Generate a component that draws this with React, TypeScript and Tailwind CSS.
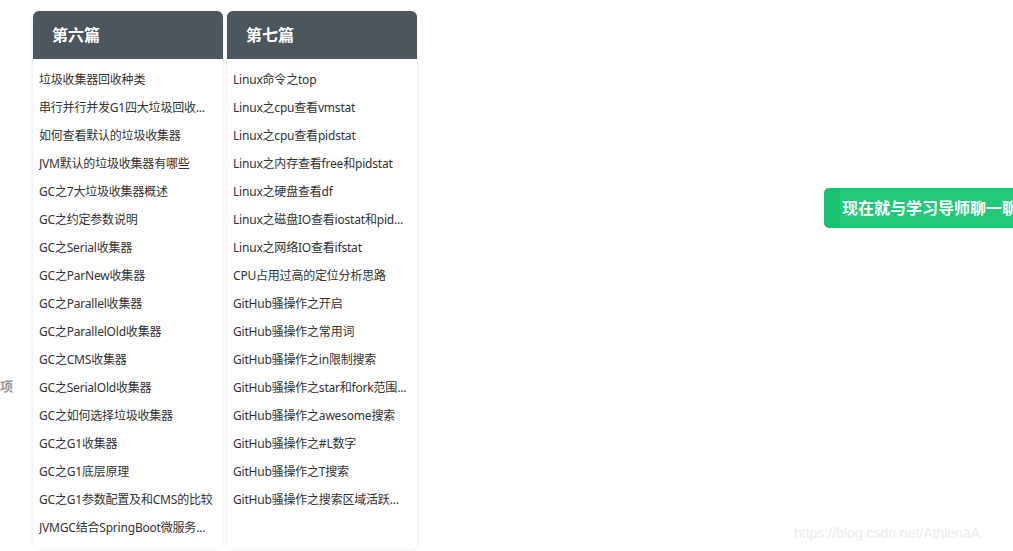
const six = [
  '垃圾收集器回收种类',
  '串行并行并发G1四大垃圾回收...',
  '如何查看默认的垃圾收集器',
  'JVM默认的垃圾收集器有哪些',
  'GC之7大垃圾收集器概述',
  'GC之约定参数说明',
  'GC之Serial收集器',
  'GC之ParNew收集器',
  'GC之Parallel收集器',
  'GC之ParallelOld收集器',
  'GC之CMS收集器',
  'GC之SerialOld收集器',
  'GC之如何选择垃圾收集器',
  'GC之G1收集器',
  'GC之G1底层原理',
  'GC之G1参数配置及和CMS的比较',
  'JVMGC结合SpringBoot微服务...',
];

const seven = [
  'Linux命令之top',
  'Linux之cpu查看vmstat',
  'Linux之cpu查看pidstat',
  'Linux之内存查看free和pidstat',
  'Linux之硬盘查看df',
  'Linux之磁盘IO查看iostat和pid...',
  'Linux之网络IO查看ifstat',
  'CPU占用过高的定位分析思路',
  'GitHub骚操作之开启',
  'GitHub骚操作之常用词',
  'GitHub骚操作之in限制搜索',
  'GitHub骚操作之star和fork范围...',
  'GitHub骚操作之awesome搜索',
  'GitHub骚操作之#L数字',
  'GitHub骚操作之T搜索',
  'GitHub骚操作之搜索区域活跃...',
];

const font = { fontFamily: '"Noto Sans", "Noto Sans CJK SC", sans-serif' };

function Card({ title, items }: { title: string; items: string[] }) {
  return (
    <div className="flex w-[190px] shrink-0 flex-col rounded-[6px] bg-white shadow-[0_0_3px_rgba(0,0,0,0.12)]">
      <div className="flex h-[48px] items-center rounded-t-[6px] bg-[#4d555d] pl-[19px] text-[16px] font-bold text-white">
        {title}
      </div>
      <ul className="flex flex-1 flex-col pt-[7px] pb-[7px] pl-[6px] pr-[2px]">
        {items.map((t) => (
          <li key={t} className="h-[28px] truncate text-[12px] leading-[28px] tracking-[-0.2px] text-[#333]">
            {t}
          </li>
        ))}
      </ul>
    </div>
  );
}

export default function App() {
  return (
    <div className="relative flex h-[551px] w-[1013px] overflow-hidden bg-white" style={font}>
      <div className="w-[33px] shrink-0 pt-[376px] text-[13px] font-bold leading-[20px] text-[#999]">项</div>
      <div className="flex gap-[4px] pt-[11px] pb-[2px]">
        <Card title="第六篇" items={six} />
        <Card title="第七篇" items={seven} />
      </div>
      <div className="shrink-0 pt-[188px] pl-[407px]">
        <button className="flex h-[40px] items-center whitespace-nowrap rounded-[5px] bg-[linear-gradient(to_right,#1ac16f_16px,#22c97a_16px)] pl-[18px] pr-[18px] text-[16px] font-bold text-white">
          现在就与学习导师聊一聊
        </button>
      </div>
      <div
        className="absolute left-[794px] top-[523px] text-[14px] text-[#ebebeb]"
        style={{ fontFamily: '"Liberation Sans", Arial, sans-serif' }}
      >
        https://blog.csdn.net/AthlenaA
      </div>
    </div>
  );
}
